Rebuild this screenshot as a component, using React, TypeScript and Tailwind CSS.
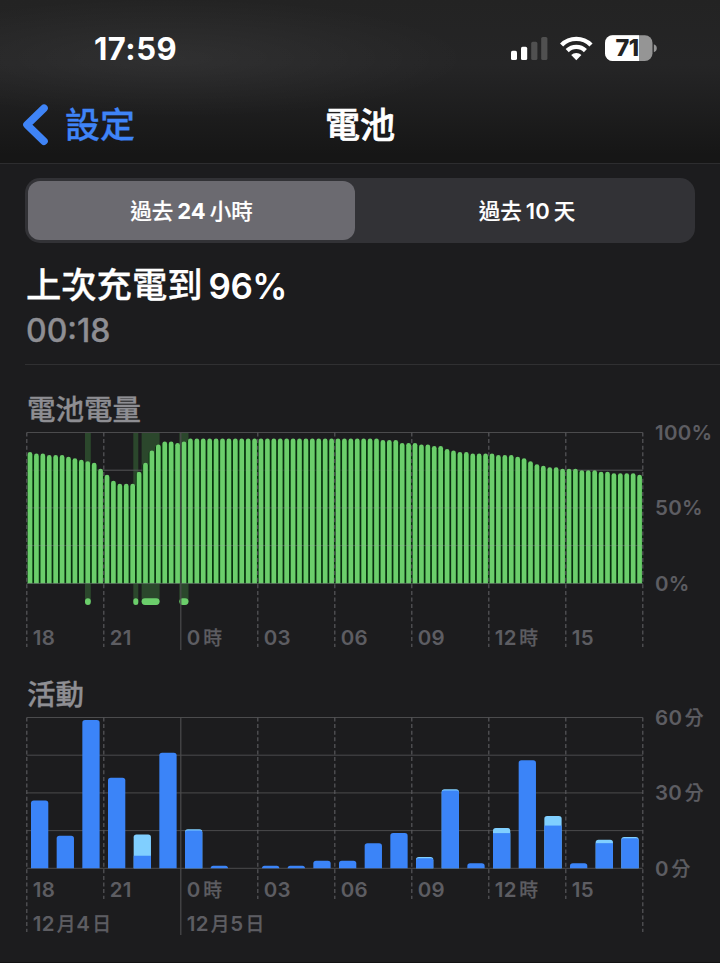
import React from "react";

const FONT = "font-['Inter','Noto_Sans_CJK_TC',sans-serif]";

const X0 = 26.8;
const STEP = 77;
const SLOT = 616 / 96;

const levels: number[] = [
  87, 86, 86, 85, 85, 85, 84, 83, 82, 81, 80, 76, 72, 68, 66, 66, 66, 74, 80, 88, 92, 94, 94, 93, 94,
  ...Array(30).fill(96),
  95, 95, 95, 93, 93, 93, 92, 92, 91, 91, 89, 88, 87, 87, 86, 86, 86, 86, 85, 85, 85, 84, 83, 81, 79,
  78, 77, 77, 76, 76, 76, 75, 75, 75, 74, 74, 73, 73, 73, 73, 72,
];

const charging = [
  { x: 85, w: 5.8 },
  { x: 133.3, w: 5 },
  { x: 141.6, w: 18 },
  { x: 179.3, w: 9.2 },
];

// Minutes per hour: screen on, then screen off.
const activity: [number, number][] = [
  [27, 0], [13, 0], [59, 0], [36, 0], [5, 8.4], [46, 0], [15, 0.5], [1, 0], [0, 0], [1, 0], [1, 0], [3, 0],
  [3, 0], [10, 0], [14, 0], [4, 0.5], [31, 0.5], [2, 0], [14, 2], [43, 0], [17, 3.8], [2, 0], [10, 1.4], [12, 0.5],
];

const hours = ["18", "21", "0時", "03", "06", "09", "12時", "15"];

function Label({ x, y, text }: { x: number; y: number; text: string }) {
  const parts = text.match(/[0-9%]+|[^0-9%]+/g) ?? [];
  return (
    <text x={x} y={y} className="fill-[#5d5d62] text-[20.5px] font-semibold tracking-[0.3px]">
      {parts.map((p, i) => {
        const cjk = !/[0-9%]/.test(p);
        return (
          <tspan
            key={i}
            dx={i === 0 ? 0 : cjk ? (parts.length > 2 ? 2 : 2.6) : 0.8}
            className={cjk ? "stroke-[#5d5d62] stroke-[0.25px] text-[18.8px] font-medium tracking-normal" : ""}
          >
            {p}
          </tspan>
        );
      })}
    </text>
  );
}

function VerticalLines({ top, ends }: { top: number; ends: number[] }) {
  return (
    <>
      {ends.map((end, i) => (
        <line
          key={i}
          x1={X0 + i * STEP}
          x2={X0 + i * STEP}
          y1={top}
          y2={end}
          stroke={i === 2 ? "#4b4b4d" : "#58585b"}
          strokeWidth={1.2}
          strokeDasharray={i === 2 ? undefined : "4 2.6"}
        />
      ))}
    </>
  );
}

function HorizontalLines({ color }: { color: string }) {
  return (
    <>
      {[0, 1, 2, 3, 4].map((i) => (
        <line key={i} x1={X0} x2={X0 + 616} y1={10.5 + i * 37.7} y2={10.5 + i * 37.7} stroke={color} strokeWidth={1} />
      ))}
    </>
  );
}

function BatteryChart() {
  const base = 161.3;
  return (
    <svg className="block overflow-visible" width="720" height="240" viewBox="0 0 720 240">
      {charging.map((c, i) => (
        <rect key={i} x={c.x} y={10} width={c.w} height={170} fill="#2b472c" />
      ))}
      <HorizontalLines color="#4b4b4d" />
      {levels.map((v, i) => (
        <rect key={i} x={X0 + i * SLOT} y={base + 2 - v * 1.508} width={SLOT + 0.1} height={v * 1.508 - 2} fill="#06320d" />
      ))}
      {levels.map((v, i) => {
        const x = X0 + i * SLOT + 0.85;
        const top = base - v * 1.508;
        return (
          <path
            key={i}
            d={`M${x} ${base}V${top + 2.3}a2.35 2.3 0 0 1 4.7 0V${base}z`}
            fill="#6bce6b"
          />
        );
      })}
      {[1, 2, 3, 4].map((i) => (
        <line key={i} x1={X0} x2={X0 + 616} y1={10.5 + i * 37.7} y2={10.5 + i * 37.7} stroke="#a0a0a5" strokeOpacity={i === 1 ? 0.12 : 0.3} />
      ))}
      {charging.map((c, i) => (
        <rect key={i} x={c.x} y={176.2} width={c.w} height={6.8} rx={Math.min(c.w / 2, 3.4)} fill="#6bce6b" />
      ))}
      <VerticalLines top={10.5} ends={[225, 225, 228, 225, 225, 225, 225, 225, 225]} />
      {hours.map((h, i) => (
        <Label key={i} x={X0 + i * STEP + 5.9} y={223} text={h} />
      ))}
      <Label x={655} y={18} text="100%" />
      <Label x={655} y={93.4} text="50%" />
      <Label x={655} y={168.8} text="0%" />
    </svg>
  );
}

function ActivityChart() {
  const base = 161.3;
  const scale = 150.8 / 60;
  return (
    <svg className="block overflow-visible" width="720" height="240" viewBox="0 0 720 240">
      <HorizontalLines color="#4b4b4d" />
      <VerticalLines top={10.5} ends={[225, 192, 228, 192, 192, 192, 192, 192, 225]} />
      {activity.map(([on, off], i) => {
        if (on + off === 0) return null;
        const x = X0 + i * (616 / 24) + 4.2;
        const h = (on + off) * scale;
        const top = base - h;
        const r = Math.min(2.8, h);
        const onTop = base - on * scale;
        return (
          <g key={i}>
            <path
              d={`M${x} ${base}V${top + r}q0 ${-r} ${r} ${-r}h${17.3 - 2 * r}q${r} 0 ${r} ${r}V${base}z`}
              fill={off > 0 ? "#80cfff" : "#3b84f8"}
            />
            {off >= 1 && <rect x={x} y={onTop} width={17.3} height={base - onTop} fill="#3b84f8" />}
            {off > 0 && off < 1 && (
              <path
                d={`M${x} ${base}V${onTop + 2}q0 -2 2 -2h13.3q2 0 2 2V${base}z`}
                fill="#3b84f8"
              />
            )}
          </g>
        );
      })}
      {hours.map((h, i) => (
        <Label key={i} x={X0 + i * STEP + 5.9} y={190} text={h} />
      ))}
      <Label x={32.7} y={223.5} text="12月4日" />
      <Label x={186.7} y={223.5} text="12月5日" />
      <Label x={655} y={18} text="60分" />
      <Label x={655} y={93.4} text="30分" />
      <Label x={655} y={168.8} text="0分" />
    </svg>
  );
}

function StatusIcons() {
  return (
    <svg className="block overflow-visible" width="160" height="30" viewBox="0 0 160 30">
      <rect x="1" y="15.8" width="6" height="9.2" rx="1.6" fill="#fff" />
      <rect x="11" y="11.8" width="6.2" height="13.2" rx="1.6" fill="#fff" />
      <rect x="21.2" y="6.8" width="6.2" height="18.2" rx="1.6" fill="#505050" />
      <rect x="31.2" y="2" width="6.2" height="23" rx="1.6" fill="#505050" />
      <g fill="none" stroke="#fff" strokeWidth="4.4">
        <path d="M51.6 10a20.8 20.8 0 0 1 29.4 0" />
        <path d="M57.2 15.6a12.9 12.9 0 0 1 18.2 0" />
      </g>
      <path d="M66.3 25.2l-5.1-5.2a7.2 7.2 0 0 1 10.2 0z" fill="#fff" />
      <clipPath id="cell">
        <rect x="95" y="0.3" width="47.5" height="25.6" rx="7.6" />
      </clipPath>
      <g clipPath="url(#cell)">
        <rect x="95" y="0" width="48" height="27" fill="#959595" />
        <rect x="95" y="0" width="34" height="27" fill="#fff" />
      </g>
      <path d="M143.8 9.2c4 1.2 4 6.8 0 8z" fill="#959595" />
      <text x="105.4" y="21.4" className="fill-[#222222] text-[23.5px] font-extrabold tracking-[-0.4px]">71</text>
    </svg>
  );
}

export default function App() {
  return (
    <div className={`${FONT} flex h-[963px] w-[720px] flex-col overflow-hidden border-b border-[#111112] bg-[#1c1c1e] text-white`}>
      <header className="flex h-[164px] shrink-0 flex-col border-b border-[#2d2d2f] bg-[radial-gradient(300px_60px_at_170px_58px,#ffffff0d,#ffffff00),linear-gradient(#232323,#252526_40%,#161616_95%)]">
        <div className="flex h-[87px] items-start justify-between pl-[94px] pr-[50px] pt-[35px]">
          <span className="-mt-px text-[31px] leading-[29px] font-bold tracking-[0.5px]">17:59</span>
          <StatusIcons />
        </div>
        <nav className="grid h-[76px] grid-cols-3 items-center">
          <div className="flex items-center pl-[22px] text-[#3f84f7]">
            <svg width="28" height="44" viewBox="0 0 28 44">
              <path d="M22 5.2L5 21.7l17 16.5" fill="none" stroke="currentColor" strokeWidth="7.6" strokeLinecap="round" strokeLinejoin="round" />
            </svg>
            <span className="pl-[15px] text-[35px] leading-[44px] font-medium [-webkit-text-stroke:0.3px]">設定</span>
          </div>
          <h1 className="text-center text-[35px] leading-[44px] font-medium [-webkit-text-stroke:0.7px]">電池</h1>
        </nav>
      </header>

      <div className="mt-[14px] ml-[25px] flex h-[65px] w-[670px] shrink-0 rounded-[15px] bg-[#323236] p-[3px] text-[22px]">
        <div className="flex w-[327px] items-center justify-center rounded-[12px] bg-[#6b6a70] pt-[1px] font-bold">
          <span className="text-[21.5px] font-medium [-webkit-text-stroke:0.2px]">過去</span>
          <span className="px-[4px]">24</span>
          <span className="text-[21.5px] font-medium [-webkit-text-stroke:0.2px]">小時</span>
        </div>
        <div className="flex flex-1 items-center justify-center pt-[1px] pl-[7px] font-semibold">
          <span className="text-[21.5px] font-medium [-webkit-text-stroke:0.2px]">過去</span>
          <span className="px-[4px]">10</span>
          <span className="text-[21.5px] font-medium [-webkit-text-stroke:0.2px]">天</span>
        </div>
      </div>

      <section className="ml-[25px] flex h-[122px] shrink-0 flex-col border-b border-[#303032] pt-[21px]">
        <div className="flex items-center gap-[6px] pl-[1px] text-[35px] leading-[44px] font-semibold">
          <span className="text-[35.3px] font-medium [-webkit-text-stroke:0.3px]">上次充電到</span>
          <span className="tracking-[-0.5px]">96%</span>
        </div>
        <div className="pt-[2px] pl-[1px] text-[32px] leading-[42px] font-medium text-[#8e8e93] [-webkit-text-stroke:0.3px]">00:18</div>
      </section>

      <section className="flex shrink-0 flex-col pt-[25px]">
        <h2 className="h-[32px] pl-[27px] text-[28.5px] leading-[40px] font-medium text-[#8e8e93] [-webkit-text-stroke:0.3px]">電池電量</h2>
        <BatteryChart />
      </section>

      <section className="flex shrink-0 flex-col pt-[13px]">
        <h2 className="h-[32px] pl-[27px] text-[28.5px] leading-[40px] font-medium text-[#8e8e93] [-webkit-text-stroke:0.3px]">活動</h2>
        <ActivityChart />
      </section>
    </div>
  );
}
